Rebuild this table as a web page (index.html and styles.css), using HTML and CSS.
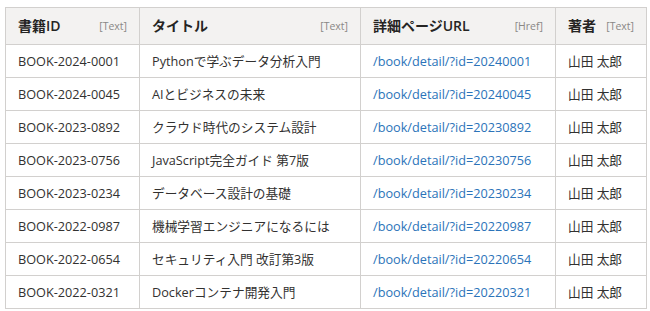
FILE: index.html
```html
<!DOCTYPE html>
<html lang="ja">
<head>
<meta charset="utf-8">
<link rel="stylesheet" href="styles.css">
</head>
<body>
<table class="grid">
  <colgroup>
    <col class="c1"><col class="c2"><col class="c3"><col class="c4">
  </colgroup>
  <thead>
    <tr>
      <th><div class="hd"><span class="lbl">書籍ID</span><span class="tag">[Text]</span></div></th>
      <th><div class="hd"><span class="lbl">タイトル</span><span class="tag">[Text]</span></div></th>
      <th><div class="hd"><span class="lbl">詳細ページURL</span><span class="tag">[Href]</span></div></th>
      <th><div class="hd"><span class="lbl">著者</span><span class="tag">[Text]</span></div></th>
    </tr>
  </thead>
  <tbody>
    <tr><td>BOOK-2024-0001</td><td>Pythonで学ぶデータ分析入門</td><td><a href="#">/book/detail/?id=20240001</a></td><td>山田 太郎</td></tr>
    <tr><td>BOOK-2024-0045</td><td>AIとビジネスの未来</td><td><a href="#">/book/detail/?id=20240045</a></td><td>山田 太郎</td></tr>
    <tr><td>BOOK-2023-0892</td><td>クラウド時代のシステム設計</td><td><a href="#">/book/detail/?id=20230892</a></td><td>山田 太郎</td></tr>
    <tr><td>BOOK-2023-0756</td><td>JavaScript完全ガイド 第7版</td><td><a href="#">/book/detail/?id=20230756</a></td><td>山田 太郎</td></tr>
    <tr><td>BOOK-2023-0234</td><td>データベース設計の基礎</td><td><a href="#">/book/detail/?id=20230234</a></td><td>山田 太郎</td></tr>
    <tr><td>BOOK-2022-0987</td><td>機械学習エンジニアになるには</td><td><a href="#">/book/detail/?id=20220987</a></td><td>山田 太郎</td></tr>
    <tr><td>BOOK-2022-0654</td><td>セキュリティ入門 改訂第3版</td><td><a href="#">/book/detail/?id=20220654</a></td><td>山田 太郎</td></tr>
    <tr><td>BOOK-2022-0321</td><td>Dockerコンテナ開発入門</td><td><a href="#">/book/detail/?id=20220321</a></td><td>山田 太郎</td></tr>
  </tbody>
</table>
</body>
</html>
```
FILE: styles.css
```css
html, body {
  margin: 0;
  padding: 0;
  background: #ffffff;
}
body {
  font-family: "Open Sans", "Noto Sans CJK JP", sans-serif;
  color: #323130;
  font-size: 12.7px;
}
.grid {
  margin: 7px 0 0 5px;
  border-collapse: collapse;
  table-layout: fixed;
  width: 641px;
}
.c1 { width: 134px; }
.c2 { width: 221px; }
.c3 { width: 195px; }
.c4 { width: 91px; }
.grid th, .grid td {
  border: 1px solid #d2d0ce;
  padding: 0 12px;
  text-align: left;
  white-space: nowrap;
  overflow: hidden;
}
.grid th {
  background: #f3f2f1;
  height: 36px;
  font-weight: 600;
  font-size: 14px;
  color: #252423;
}
.grid td {
  height: 32px;
  line-height: 18px;
}
.hd {
  display: flex;
  justify-content: space-between;
  align-items: center;
  gap: 8px;
}
.lbl {
  line-height: 20px;
}
.tag {
  font-weight: 400;
  font-size: 10.5px;
  color: #8a8886;
}
.grid a {
  color: #2b73b9;
  text-decoration: none;
}
```
